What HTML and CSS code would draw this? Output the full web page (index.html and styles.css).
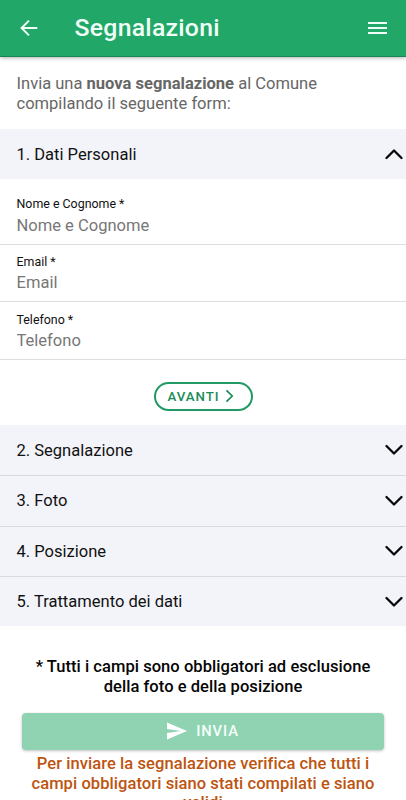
FILE: index.html
```html
<!DOCTYPE html>
<html lang="it">
<head>
<meta charset="utf-8">
<meta name="viewport" content="width=device-width, initial-scale=1">
<title>Segnalazioni</title>
<link rel="stylesheet" href="styles.css">
</head>
<body>
<header class="toolbar">
  <svg class="back" width="18" height="18" viewBox="0 0 18 18"><path d="M17.3 9H1.8M9 1.6L1.6 9L9 16.4"/></svg>
  <h1>Segnalazioni</h1>
  <svg class="menu" width="19" height="14" viewBox="0 0 19 14"><path d="M0 2H19M0 7H19M0 12H19"/></svg>
</header>
<main>
  <p class="intro">Invia una <b>nuova segnalazione</b> al Comune<br>compilando il seguente form:</p>
  <section class="step open"><span>1. Dati Personali</span><svg class="chev" width="18" height="12" viewBox="0 0 18 12"><path d="M1.5 10L9 2.5L16.5 10"/></svg></section>
  <form class="fields">
    <label class="field"><span>Nome e Cognome *</span><input type="text" placeholder="Nome e Cognome"></label>
    <label class="field"><span>Email *</span><input type="text" placeholder="Email"></label>
    <label class="field"><span>Telefono *</span><input type="text" placeholder="Telefono"></label>
  </form>
  <div class="next-row"><button class="next">AVANTI<svg width="9" height="14" viewBox="0 0 9 14"><path d="M1.5 1.3L7.2 7L1.5 12.7"/></svg></button></div>
  <div class="steps">
    <section class="step"><span>2. Segnalazione</span><svg class="chev" width="18" height="12" viewBox="0 0 18 12"><path d="M1.5 2L9 9.5L16.5 2"/></svg></section>
    <section class="step"><span>3. Foto</span><svg class="chev" width="18" height="12" viewBox="0 0 18 12"><path d="M1.5 2L9 9.5L16.5 2"/></svg></section>
    <section class="step"><span>4. Posizione</span><svg class="chev" width="18" height="12" viewBox="0 0 18 12"><path d="M1.5 2L9 9.5L16.5 2"/></svg></section>
    <section class="step"><span>5. Trattamento dei dati</span><svg class="chev" width="18" height="12" viewBox="0 0 18 12"><path d="M1.5 2L9 9.5L16.5 2"/></svg></section>
  </div>
  <p class="note">* Tutti i campi sono obbligatori ad esclusione<br>della foto e della posizione</p>
  <button class="send"><svg width="20" height="18" viewBox="0 0 20 18"><path d="M0 17.5L20 9L0 .5V7L14 9L0 11Z"/></svg>INVIA</button>
  <p class="warning">Per inviare la segnalazione verifica che tutti i<br>campi obbligatori siano stati compilati e siano<br>validi</p>
</main>
</body>
</html>
```

FILE: styles.css
```css
* { box-sizing: border-box; }
html, body { height: 100%; }
body {
  margin: 0;
  overflow: hidden;
  background: #fff;
  color: #111;
  font-family: Roboto, sans-serif;
  font-size: 16.54px;
}
h1, p { margin: 0; }
svg { display: block; flex: none; fill: none; }
.toolbar {
  display: flex;
  align-items: center;
  height: 57px;
  padding: 0 19px 0 20px;
  background: #21a767;
  border-bottom: 1px solid #168653;
  box-shadow: 0 1px 4px rgba(0, 0, 0, .3);
  color: #effff8;
}
.toolbar h1 {
  flex: 1;
  margin: -2px 0 0 36.5px;
  font-size: 24.8px;
  font-weight: 500;
  letter-spacing: .26px;
}
.back, .menu { stroke: #effff8; stroke-width: 2; }
.intro {
  height: 72px;
  padding: 17px 16.5px 0;
  color: #666;
  line-height: 19.6px;
}
.step {
  display: flex;
  align-items: center;
  justify-content: space-between;
  height: 50.3px;
  padding: 0 3px 0 16.5px;
  background: #f3f4f9;
}
.step + .step { border-top: 1px solid #d8d9de; }
.chev { stroke: #080808; stroke-width: 2.3; stroke-linecap: round; stroke-linejoin: round; }
.open { height: 50px; }
.fields { padding-top: 8px; }
.field {
  display: block;
  height: 57.6px;
  padding-top: 9.4px;
  padding-left: 16.5px;
  border-bottom: 1px solid #dedede;
}
.field span { display: block; font-size: 12.4px; line-height: 16px; }
.field input {
  display: block;
  width: 100%;
  height: 26px;
  padding: 0;
  border: 0;
  outline: 0;
  background: none;
  font: inherit;
}
.field input::placeholder { color: #777; opacity: 1; }
.next-row { display: flex; justify-content: center; height: 65.2px; padding-top: 22px; }
button { font-family: inherit; font-weight: 500; border: 0; }
.next {
  display: flex;
  align-items: center;
  gap: 5px;
  width: 99px;
  height: 29px;
  padding: 0 0 0 12px;
  border: 2px solid #219a65;
  border-radius: 15px;
  background: #fff;
  color: #198c59;
  font-size: 13.3px;
  letter-spacing: .95px;
}
.next svg { stroke: #198c59; stroke-width: 1.7; }
.note {
  padding-top: 31px;
  color: #050505;
  font-weight: 500;
  line-height: 19.6px;
  letter-spacing: .04px;
  text-align: center;
}
.send {
  display: flex;
  align-items: center;
  justify-content: center;
  gap: 9px;
  width: 362px;
  height: 37px;
  margin: 16.4px 0 0 22px;
  border-radius: 4px;
  background: #90d3b3;
  box-shadow: 0 1px 3px rgba(0, 0, 0, .25);
  color: #f5fffa;
  font-size: 14.7px;
  letter-spacing: .9px;
}
.send svg { fill: #fff; }
.warning {
  padding-top: 4.3px;
  color: #bd5410;
  font-weight: 500;
  line-height: 19.6px;
  letter-spacing: .06px;
  text-align: center;
}
```
